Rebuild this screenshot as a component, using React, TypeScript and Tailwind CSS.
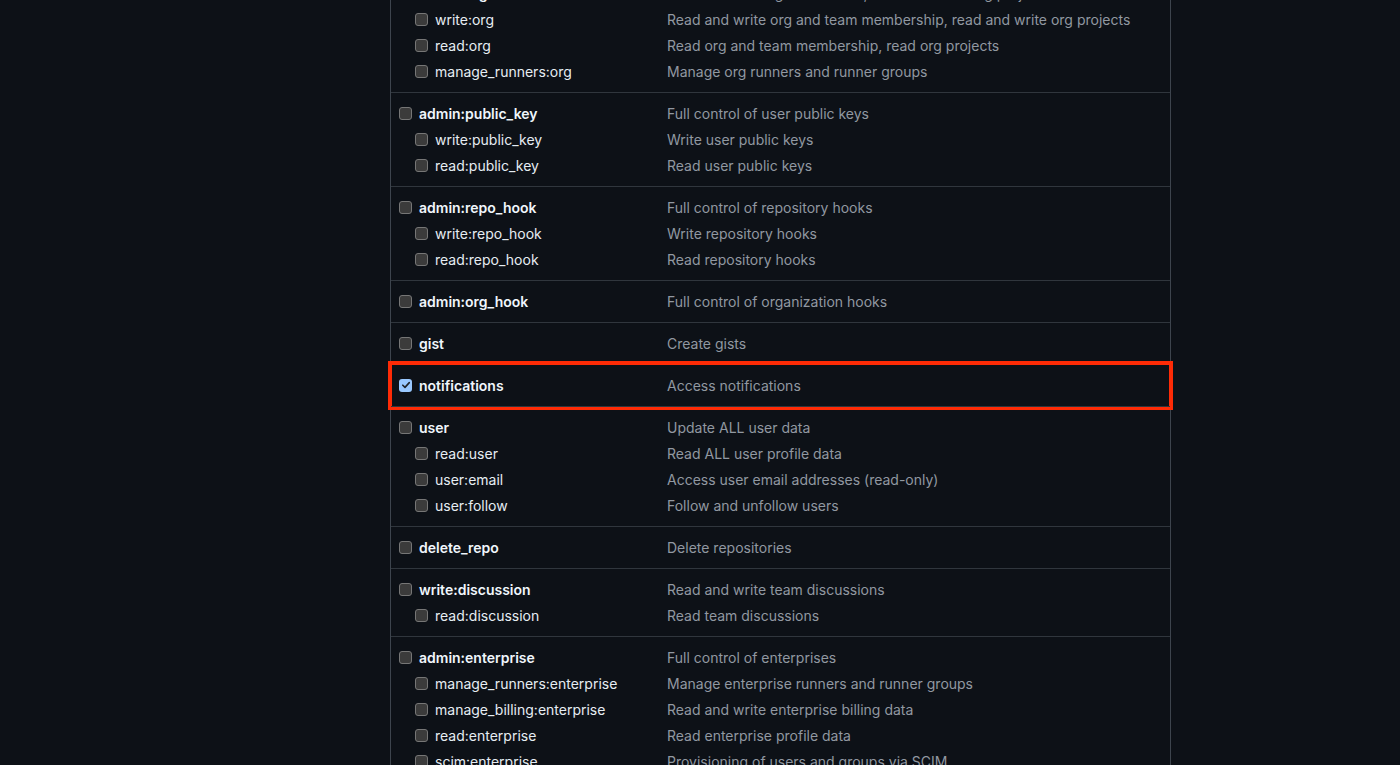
import React from "react";

type Scope = { name: string; desc: string; checked?: boolean };
type Group = { top: Scope; subs?: Scope[]; highlight?: boolean };

const groups: Group[] = [
  {
    top: { name: "admin:org", desc: "Full control of orgs and teams, read and write org projects" },
    subs: [
      { name: "write:org", desc: "Read and write org and team membership, read and write org projects" },
      { name: "read:org", desc: "Read org and team membership, read org projects" },
      { name: "manage_runners:org", desc: "Manage org runners and runner groups" },
    ],
  },
  {
    top: { name: "admin:public_key", desc: "Full control of user public keys" },
    subs: [
      { name: "write:public_key", desc: "Write user public keys" },
      { name: "read:public_key", desc: "Read user public keys" },
    ],
  },
  {
    top: { name: "admin:repo_hook", desc: "Full control of repository hooks" },
    subs: [
      { name: "write:repo_hook", desc: "Write repository hooks" },
      { name: "read:repo_hook", desc: "Read repository hooks" },
    ],
  },
  { top: { name: "admin:org_hook", desc: "Full control of organization hooks" } },
  { top: { name: "gist", desc: "Create gists" } },
  { top: { name: "notifications", desc: "Access notifications", checked: true }, highlight: true },
  {
    top: { name: "user", desc: "Update ALL user data" },
    subs: [
      { name: "read:user", desc: "Read ALL user profile data" },
      { name: "user:email", desc: "Access user email addresses (read-only)" },
      { name: "user:follow", desc: "Follow and unfollow users" },
    ],
  },
  { top: { name: "delete_repo", desc: "Delete repositories" } },
  {
    top: { name: "write:discussion", desc: "Read and write team discussions" },
    subs: [{ name: "read:discussion", desc: "Read team discussions" }],
  },
  {
    top: { name: "admin:enterprise", desc: "Full control of enterprises" },
    subs: [
      { name: "manage_runners:enterprise", desc: "Manage enterprise runners and runner groups" },
      { name: "manage_billing:enterprise", desc: "Read and write enterprise billing data" },
      { name: "read:enterprise", desc: "Read enterprise profile data" },
      { name: "scim:enterprise", desc: "Provisioning of users and groups via SCIM" },
    ],
  },
];

function Checkbox({ checked }: { checked?: boolean }) {
  if (checked) {
    return (
      <span className="flex h-[13px] w-[13px] shrink-0 items-center justify-center rounded-[3px] bg-[#99c8ff]">
        <svg width="10" height="10" viewBox="0 0 10 10" fill="none">
          <path d="M1.8 5.2 4 7.4 8.3 2.6" stroke="#1f2328" strokeWidth="1.6" strokeLinecap="round" strokeLinejoin="round" />
        </svg>
      </span>
    );
  }
  return (
    <span className="block h-[13px] w-[13px] shrink-0 rounded-[3px] border border-[#767676] bg-[#3b3b3b]" />
  );
}

function Row({ scope, sub }: { scope: Scope; sub?: boolean }) {
  return (
    <div className="flex h-[26px] items-center">
      <div className={`flex w-[268px] items-center ${sub ? "pl-[24px]" : "pl-[8px]"}`}>
        <Checkbox checked={scope.checked} />
        <span
          className={`ml-[7px] text-[14px] ${
            sub ? "text-[#e6edf3]" : "font-semibold text-[#f0f6fc]"
          }`}
        >
          {scope.name}
        </span>
      </div>
      <span className="pl-[8px] text-[14px] text-[#9198a1]">{scope.desc}</span>
    </div>
  );
}

export default function App() {
  return (
    <div
      className="h-[765px] w-[1400px] overflow-hidden bg-[#0d1117]"
      style={{ fontFamily: "Inter, 'Noto Sans', sans-serif" }}
    >
      <div className="ml-[390px] mt-[-27px] w-[781px] border-x border-[#3d444d]">
        {groups.map((g, i) => (
          <div
            key={g.top.name}
            className={`relative pb-[8px] pt-[7px] ${i > 0 ? "border-t border-[#30363d]" : ""}`}
          >
            <Row scope={g.top} />
            {g.subs?.map((s) => (
              <Row key={s.name} scope={s} sub />
            ))}
            {g.highlight && (
              <div className="pointer-events-none absolute left-[-3px] right-[-3px] top-[-4px] bottom-[-4px] border-[4px] border-[#fe2b06]" />
            )}
          </div>
        ))}
      </div>
    </div>
  );
}
